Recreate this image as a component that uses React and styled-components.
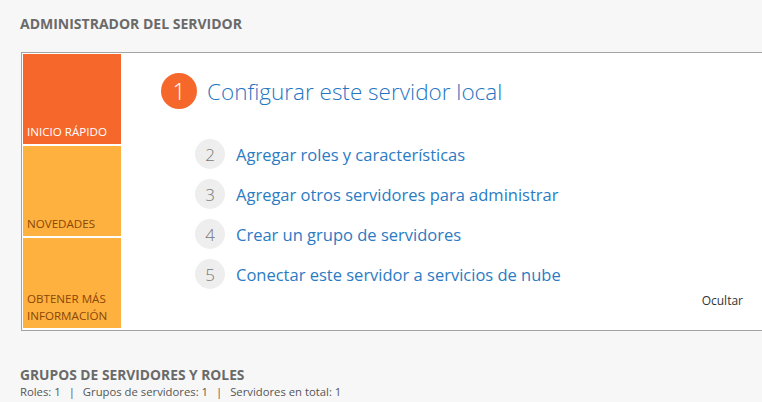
import React from 'react';
import styled, { createGlobalStyle } from 'styled-components';

const GlobalStyle = createGlobalStyle`
  html, body {
    margin: 0;
    padding: 0;
    background: #f7f7f7;
    overflow: hidden;
  }
  body {
    font-family: 'Open Sans', 'Noto Sans', sans-serif;
  }
`;

const tiles = [
  { label: 'Inicio rápido', bg: '#f5672a', color: '#ffffff' },
  { label: 'Novedades', bg: '#feb13f', color: '#8a4708' },
  { label: 'Obtener más información', bg: '#feb13f', color: '#8a4708' },
];

const steps = [
  'Agregar roles y características',
  'Agregar otros servidores para administrar',
  'Crear un grupo de servidores',
  'Conectar este servidor a servicios de nube',
];

const App = () => (
  <>
    <GlobalStyle />
    <Page>
      <Heading>Administrador del servidor</Heading>
      <Panel>
        <TileColumn>
          {tiles.map((t) => (
            <Tile key={t.label} bg={t.bg} fg={t.color}>
              <span>{t.label}</span>
            </Tile>
          ))}
        </TileColumn>
        <Content>
          <MainStep>
            <MainBadge>1</MainBadge>
            <MainLink>Configurar este servidor local</MainLink>
          </MainStep>
          <StepList>
            {steps.map((s, i) => (
              <Step key={s}>
                <StepBadge>{i + 2}</StepBadge>
                <StepLink>{s}</StepLink>
              </Step>
            ))}
          </StepList>
          <Footer>
            <HideLink>Ocultar</HideLink>
          </Footer>
        </Content>
      </Panel>
      <Section>
        <SectionTitle>Grupos de servidores y roles</SectionTitle>
        <Stats>
          Roles: 1 <Sep>|</Sep> Grupos de servidores: 1 <Sep>|</Sep> Servidores en total: 1
        </Stats>
      </Section>
    </Page>
  </>
);

const Page = styled.div`
  padding: 14px 0 0 20px;
`;

const Heading = styled.h1`
  margin: 0;
  font-size: 14px;
  line-height: 20px;
  font-weight: 700;
  color: #6a6a6a;
  text-transform: uppercase;
`;

const Panel = styled.div`
  display: flex;
  width: 780px;
  height: 275px;
  margin: 18px 0 0 1px;
  padding: 1px;
  border: 1px solid #a3a3a3;
  background: #ffffff;
`;

const TileColumn = styled.div`
  display: flex;
  flex-direction: column;
  gap: 2px;
  width: 98px;
  flex-shrink: 0;
`;

const Tile = styled.div`
  height: 90px;
  display: flex;
  align-items: flex-end;
  padding: 0 4px 4px;
  box-sizing: border-box;
  background: ${(p) => p.bg};
  color: ${(p) => p.fg};
  font-size: 11.6px;
  line-height: 17px;
  text-transform: uppercase;
`;

const Content = styled.div`
  flex: 1;
  display: flex;
  flex-direction: column;
  padding: 19px 0 0 40px;
`;

const MainStep = styled.div`
  display: flex;
  align-items: center;
  gap: 10px;
`;

const MainBadge = styled.div`
  width: 36px;
  height: 36px;
  border-radius: 50%;
  background: #f5672a;
  color: #fff;
  display: flex;
  align-items: center;
  justify-content: center;
  font-size: 23px;
  font-weight: 300;
`;

const MainLink = styled.a`
  font-size: 22.5px;
  font-weight: 300;
  color: #1f76c2;
`;

const StepList = styled.div`
  display: flex;
  flex-direction: column;
  gap: 10px;
  margin: 30px 0 0 34px;
`;

const Step = styled.div`
  display: flex;
  align-items: center;
  gap: 11px;
`;

const StepBadge = styled.div`
  width: 30px;
  height: 30px;
  border-radius: 50%;
  background: #eeeeee;
  color: #777;
  display: flex;
  align-items: center;
  justify-content: center;
  font-size: 17px;
  font-weight: 300;
`;

const StepLink = styled.a`
  font-size: 16.5px;
  color: #2a7bc4;
`;

const Footer = styled.div`
  display: flex;
  justify-content: flex-end;
  padding: 4px 60px 0 0;
`;

const HideLink = styled.a`
  font-size: 12px;
  line-height: 16px;
  color: #333;
`;

const Section = styled.div`
  margin-top: 36px;
`;

const SectionTitle = styled.h2`
  margin: 0;
  font-size: 13.8px;
  line-height: 16px;
  font-weight: 700;
  color: #6a6a6a;
  text-transform: uppercase;
`;

const Stats = styled.div`
  font-size: 11.3px;
  line-height: 18px;
  color: #555;
`;

const Sep = styled.span`
  margin: 0 5px;
  color: #555;
`;

export default App;
